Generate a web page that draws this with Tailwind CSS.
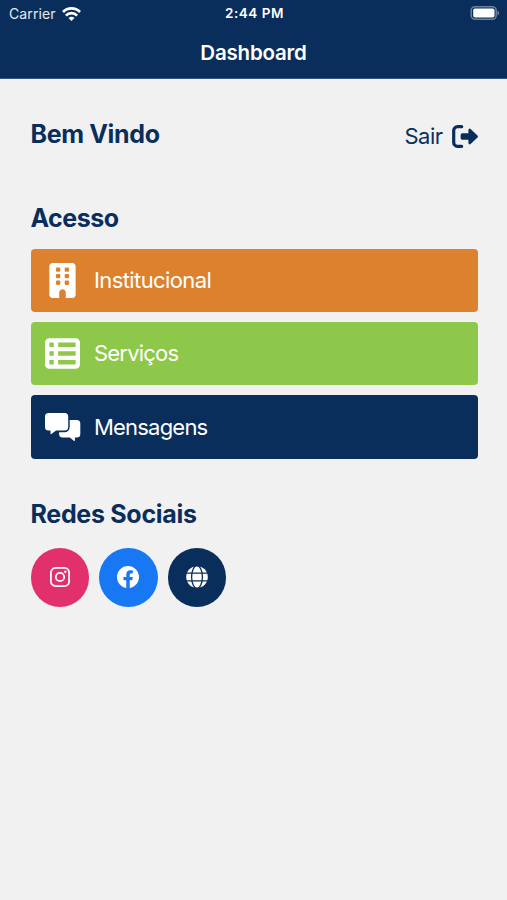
<!DOCTYPE html>
<html lang="pt-BR">
<head>
    <meta charset="UTF-8">
    <meta name="viewport" content="width=device-width, initial-scale=1.0">
    <title>Dashboard</title>
    <script src="https://cdn.jsdelivr.net/npm/@tailwindcss/browser@4"></script>
</head>
<body class="min-h-screen bg-[#f1f1f1] font-['Inter','Liberation_Sans',sans-serif] text-[#0a2e5c]">
    <!-- Header -->
    <header class="h-[79px] border-b border-[#345681] bg-[#0a2e5c] text-white">
        <div class="grid h-[27px] grid-cols-3 items-center pl-[9px] pr-[7px]">
            <div class="flex items-center gap-[6px]">
                <span class="text-[14px] leading-none tracking-[0.1px] text-white/90">Carrier</span>
                <svg class="h-[14px] w-[19px]" viewBox="0 0 19 14" fill="none" stroke="white" stroke-width="2.7">
                    <path d="M1 5a12 12 0 0 1 17 0" />
                    <path d="M3.900 8.600a7.700 7.700 0 0 1 11.200 0" />
                    <path d="M9.500 13.900 6.500 10.900a4.200 4.200 0 0 1 6 0z" fill="white" stroke="none" />
                </svg>
            </div>
            <span class="text-center text-[13.500px] font-semibold leading-none tracking-[0.500px]">2:44 PM</span>
            <svg class="h-[15px] w-[30px] justify-self-end" viewBox="0 0 30 15">
                <rect x="1.200" y="0.700" width="25" height="12.600" rx="3.800" fill="none" stroke="white" stroke-opacity=".4" stroke-width="1.500" />
                <rect x="3.200" y="2.500" width="21.300" height="9" rx="1.800" fill="white" />
                <path d="M27.500 4.700c2 .8 2 3.800 0 4.600z" fill="white" fill-opacity=".45" />
            </svg>
        </div>
        <h1 class="pt-[13px] text-center text-[20.500px] font-semibold leading-[25px] tracking-[-0.200px]">Dashboard</h1>
    </header>

    <main class="pl-[30.500px] pr-[29.500px]">
        <!-- Welcome -->
        <div class="flex items-start justify-between pt-[39px]">
            <h2 class="text-[25px] font-bold leading-[32px] tracking-[-0.350px]">Bem Vindo</h2>
            <a href="#" class="flex items-center gap-[9px] pt-[2px]">
                <span class="text-[22px] leading-[32px] tracking-[-0.500px]">Sair</span>
                <svg class="h-[23px] w-[26px]" viewBox="0 0 26 23" fill="currentColor">
                    <path d="M9.700 1.700H5.500a3.800 3.800 0 0 0-3.800 3.800v12a3.800 3.800 0 0 0 3.800 3.800h4.200" fill="none" stroke="currentColor" stroke-width="3.200" stroke-linecap="round" />
                    <path d="M25.500 10.600 18.600 4a1.300 1.300 0 0 0-2.200.9v3.400h-6.100a1.700 1.700 0 0 0-1.700 1.700v3a1.700 1.700 0 0 0 1.700 1.700h6.100v3.400a1.300 1.300 0 0 0 2.200.9l6.900-6.600a1.300 1.300 0 0 0 0-1.800z" />
                </svg>
            </a>
        </div>

        <!-- Access -->
        <h2 class="mt-[50px] text-[25px] font-bold leading-[32px] tracking-[-0.500px]">Acesso</h2>
        <div class="mt-[14.700px] flex flex-col gap-[10px] text-[22px] text-white">
            <a href="#" class="flex h-[63.400px] items-center rounded-[4px] bg-[#dc822f] pl-[14px]">
                <svg class="h-[35px] w-[35px]" viewBox="-64 0 512 512" fill="white">
                    <path fill-rule="evenodd" d="M48 0C21.500 0 0 21.500 0 48v416c0 26.500 21.500 48 48 48h96v-80c0-26.500 21.500-48 48-48s48 21.500 48 48v80h96c26.500 0 48-21.500 48-48V48c0-26.500-21.500-48-48-48H48zM112 64h32a16 16 0 0 1 16 16v32a16 16 0 0 1-16 16h-32a16 16 0 0 1-16-16V80a16 16 0 0 1 16-16zM240 64h32a16 16 0 0 1 16 16v32a16 16 0 0 1-16 16h-32a16 16 0 0 1-16-16V80a16 16 0 0 1 16-16zM112 160h32a16 16 0 0 1 16 16v32a16 16 0 0 1-16 16h-32a16 16 0 0 1-16-16v-32a16 16 0 0 1 16-16zM240 160h32a16 16 0 0 1 16 16v32a16 16 0 0 1-16 16h-32a16 16 0 0 1-16-16v-32a16 16 0 0 1 16-16zM112 256h32a16 16 0 0 1 16 16v32a16 16 0 0 1-16 16h-32a16 16 0 0 1-16-16v-32a16 16 0 0 1 16-16zM240 256h32a16 16 0 0 1 16 16v32a16 16 0 0 1-16 16h-32a16 16 0 0 1-16-16v-32a16 16 0 0 1 16-16z" />
                </svg>
                <span class="ml-[14.500px] tracking-[-0.600px]">Institucional</span>
            </a>
            <a href="#" class="flex h-[63.400px] items-center rounded-[4px] bg-[#8ec84a] pl-[14px]">
                <svg class="h-[35px] w-[35px]" viewBox="0 0 512 512" fill="white">
                    <path fill-rule="evenodd" d="M64 32h384a64 64 0 0 1 64 64v320a64 64 0 0 1-64 64H64a64 64 0 0 1-64-64V96a64 64 0 0 1 64-64zM64 96v64h64V96H64zM192 96v64h256V96H192zM64 224v64h64v-64H64zM192 224v64h256v-64H192zM64 352v64h64v-64H64zM192 352v64h256v-64H192z" />
                </svg>
                <span class="ml-[14.500px] tracking-[-0.800px]">Serviços</span>
            </a>
            <a href="#" class="flex h-[63.400px] items-center rounded-[4px] bg-[#0a2e5c] pl-[14px]">
                <svg class="h-[28px] w-[36px]" viewBox="0 0 36 28" fill="white">
                    <path d="M3.600 0h16a3.600 3.600 0 0 1 3.600 3.600v10.400a3.600 3.600 0 0 1-3.600 3.600h-8.500l-4.800 3.500a.5.5 0 0 1-.8-.4v-3.100H3.600A3.600 3.600 0 0 1 0 14V3.600A3.600 3.600 0 0 1 3.600 0z" />
                    <path d="M24.700 7h7a3.600 3.600 0 0 1 3.600 3.600v10.400a3.600 3.600 0 0 1-3.600 3.600h-1.800v2.900a.5.5 0 0 1-.8.4l-4.400-3.300h-7.100a3.600 3.600 0 0 1-3.500-3.600v-1.800h5.500a5.200 5.200 0 0 0 5.100-5.200z" />
                </svg>
                <span class="ml-[13.500px] tracking-[-0.800px]">Mensagens</span>
            </a>
        </div>

        <!-- Social networks -->
        <h2 class="mt-[38.700px] text-[25px] font-bold leading-[32px] tracking-[-0.300px]">Redes Sociais</h2>
        <div class="mt-[18.600px] flex gap-[10px]">
            <a href="#" class="flex size-[58.500px] items-center justify-center rounded-full bg-[#e1306c]">
                <svg class="size-[20px]" viewBox="0 0 20 20" fill="none" stroke="white" stroke-width="1.800">
                    <rect x="0.900" y="0.900" width="18.200" height="18.200" rx="4.700" />
                    <circle cx="10" cy="10" r="4.200" />
                    <circle cx="15.300" cy="4.700" r="1.200" fill="white" stroke="none" />
                </svg>
            </a>
            <a href="#" class="flex size-[58.500px] items-center justify-center rounded-full bg-[#1877f2]">
                <svg class="size-[22px]" viewBox="0 0 24 24" fill="white">
                    <path d="M24 12.070C24 5.400 18.630 0 12 0S0 5.400 0 12.070C0 18.100 4.390 23.100 10.130 24v-8.440H7.080v-3.490h3.050V9.410c0-3.020 1.790-4.690 4.530-4.690 1.310 0 2.680.24 2.680.24v2.970h-1.510c-1.490 0-1.960.93-1.960 1.890v2.250h3.330l-.53 3.490h-2.800V24C19.610 23.100 24 18.100 24 12.070z" />
                </svg>
            </a>
            <a href="#" class="flex size-[58.500px] items-center justify-center rounded-full bg-[#0a2e5c]">
                <svg class="size-[22px]" viewBox="0 0 22 22">
                    <circle cx="11" cy="11" r="10.800" fill="white" />
                    <g fill="none" stroke="#0a2e5c" stroke-width="1.300">
                        <ellipse cx="11" cy="11" rx="5.400" ry="11.400" />
                        <path d="M0 7.200h22M0 14.800h22" />
                    </g>
                </svg>
            </a>
        </div>
    </main>
</body>
</html>
